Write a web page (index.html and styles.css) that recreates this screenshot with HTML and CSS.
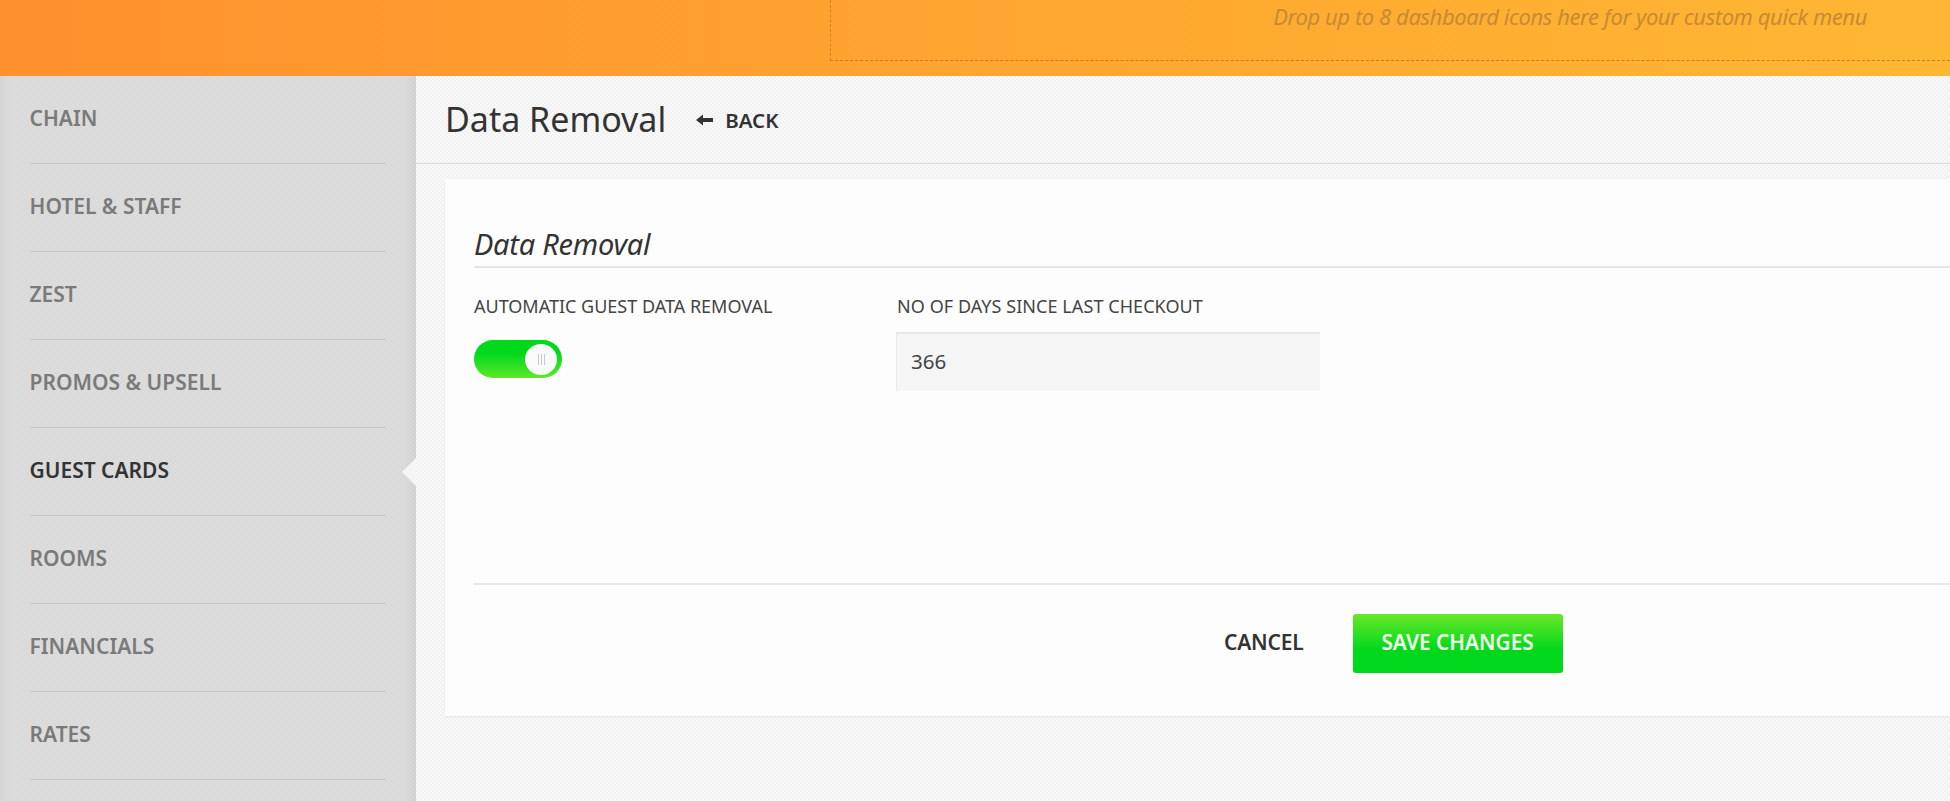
FILE: index.html
```html
<!DOCTYPE html>
<html lang="en">
<head>
<meta charset="utf-8">
<title>Data Removal</title>
<link rel="stylesheet" href="styles.css">
</head>
<body>
<div class="app">
  <header class="topbar">
    <div class="dropzone"><span class="drop-hint">Drop up to 8 dashboard icons here for your custom quick menu</span></div>
  </header>
  <div class="main">
    <nav class="sidebar">
      <ul class="nav">
        <li class="nav-item">CHAIN</li>
        <li class="nav-item">HOTEL &amp; STAFF</li>
        <li class="nav-item">ZEST</li>
        <li class="nav-item">PROMOS &amp; UPSELL</li>
        <li class="nav-item nav-item-active">GUEST CARDS</li>
        <li class="nav-item">ROOMS</li>
        <li class="nav-item">FINANCIALS</li>
        <li class="nav-item">RATES</li>
      </ul>
    </nav>
    <section class="content">
      <div class="page-head">
        <h1 class="page-title">Data Removal</h1>
        <a class="back-link">
          <svg class="back-icon" width="17" height="12" viewBox="0 0 17 12" aria-hidden="true"><path d="M0 6 L7 0.5 V4 H17 V8 H7 V11.5 Z" fill="#333"/></svg>
          BACK
        </a>
      </div>
      <div class="card">
        <h2 class="card-title">Data Removal</h2>
        <div class="fields">
          <div class="field field-toggle">
            <label class="field-label">AUTOMATIC GUEST DATA REMOVAL</label>
            <div class="toggle"><span class="knob"><span class="grip"></span></span></div>
          </div>
          <div class="field">
            <label class="field-label label-days">NO OF DAYS SINCE LAST CHECKOUT</label>
            <div class="input">366</div>
          </div>
        </div>
        <div class="actions">
          <a class="btn-cancel">CANCEL</a>
          <a class="btn-save">SAVE CHANGES</a>
        </div>
      </div>
    </section>
  </div>
</div>
</body>
</html>
```
FILE: styles.css
```css
* { box-sizing: border-box; }
html, body { margin: 0; height: 100%; overflow: hidden; }
body {
  font-family: "Noto Sans", "Open Sans", sans-serif;
  color: #333;
}
.app { display: flex; flex-direction: column; height: 801px; }

.topbar {
  height: 76px;
  flex: none;
  padding-left: 830px;
  background:
    radial-gradient(circle at 1px 1px, rgba(255,255,255,.03) 1px, transparent 1.2px) 0 0 / 4px 4px,
    radial-gradient(circle at 1px 1px, rgba(255,255,255,.03) 1px, transparent 1.2px) 2px 2px / 4px 4px,
    linear-gradient(90deg, #ff8f2a 0%, #ffa02c 40%, #ffb62f 100%);
}
.dropzone {
  height: 61px;
  border-left: 1px dashed rgba(170,100,20,.55);
  border-bottom: 1px dashed rgba(170,100,20,.65);
  display: flex;
  justify-content: flex-end;
  padding: 1px 83px 0 0;
}
.drop-hint {
  font-style: italic;
  font-size: 22px;
  line-height: 30px;
  letter-spacing: -.42px;
  color: #c98a35;
}

.main { flex: 1; display: flex; min-height: 0; }

.sidebar {
  width: 416px;
  flex: none;
  padding: 0 30px;
  background:
    radial-gradient(circle at 1px 1px, rgba(255,255,255,.1) 1px, transparent 1.2px) 0 0 / 4px 4px,
    radial-gradient(circle at 1px 1px, rgba(255,255,255,.1) 1px, transparent 1.2px) 2px 2px / 4px 4px,
    linear-gradient(90deg, #d3d3d3 0, #d9d9d9 10px, #d9d9d9 404px, #cfcfcf 416px);
}
.nav { list-style: none; margin: 0; padding: 0; }
.nav-item {
  position: relative;
  height: 88px;
  padding-top: 26px;
  line-height: 32px;
  font-size: 21px;
  font-weight: 600;
  text-indent: -.5px;
  color: #7a7a7a;
  border-bottom: 1px solid #c6c6c6;
}
.nav-item-active { color: #333; }
.nav-item-active::after {
  content: "";
  position: absolute;
  right: -30px;
  top: 30px;
  border: 14px solid transparent;
  border-left-width: 0;
  border-right-color: #f5f5f5;
}

.content {
  flex: 1;
  min-width: 0;
  background:
    radial-gradient(circle at 1px 1px, rgba(255,255,255,.55) 1px, transparent 1.2px) 0 0 / 4px 4px,
    radial-gradient(circle at 1px 1px, rgba(255,255,255,.55) 1px, transparent 1.2px) 2px 2px / 4px 4px,
    #f1f1f1;
}
.page-head {
  height: 88px;
  padding: 0 0 0 29px;
  display: flex;
  align-items: center;
  border-bottom: 1px solid #dcdcdc;
}
.page-title {
  margin: 0 0 2px;
  font-size: 34px;
  font-weight: 400;
  color: #333;
}
.back-link {
  margin-left: 30px;
  display: flex;
  align-items: center;
  gap: 12px;
  font-size: 20.5px;
  font-weight: 600;
  color: #333;
}
.back-icon { flex: none; }

.card {
  margin: 15px 0 0 29px;
  height: 537px;
  padding: 48px 0 0 29px;
  background: #fdfdfd;
  box-shadow: 0 1px 2px rgba(0,0,0,.07);
}
.card-title {
  margin: 0;
  height: 41px;
  line-height: 33px;
  font-size: 29px;
  font-style: italic;
  font-weight: 400;
  letter-spacing: -.25px;
  color: #333;
  border-bottom: 2px solid #e6e6e6;
}
.fields { display: flex; margin-top: 23px; }
.field { display: flex; flex-direction: column; }
.field-toggle { width: 422px; }
.field-label {
  font-size: 18px;
  line-height: 30px;
  color: #444;
}
.label-days { letter-spacing: .07px; padding-left: 1px; }
.toggle {
  position: relative;
  margin-top: 19px;
  width: 88px;
  height: 38px;
  border-radius: 19px;
  background: linear-gradient(180deg, #00d81c 0%, #00d81c 35%, #5ee828 100%);
}
.knob {
  position: absolute;
  top: 4px;
  right: 5px;
  width: 32px;
  height: 31px;
  border-radius: 50%;
  background: #fafafa;
  display: flex;
  align-items: center;
  justify-content: center;
}
.grip {
  width: 7px;
  height: 11px;
  background: repeating-linear-gradient(90deg, #c9c9c9 0, #c9c9c9 1px, transparent 1px, transparent 3px);
}
.input {
  margin-top: 11px;
  width: 424px;
  height: 59px;
  padding: 0 14px 3px;
  display: flex;
  align-items: center;
  font-size: 20.5px;
  color: #444;
  background: #f5f5f5;
  border-top: 2px solid #e8e8e8;
  border-left: 1px solid #e8e8e8;
}
.actions {
  margin-top: 192px;
  border-top: 2px solid #e8e8e8;
  padding-top: 29px;
  display: flex;
  align-items: center;
}
.btn-cancel {
  margin: 0 0 4px 750px;
  font-size: 21px;
  font-weight: 600;
  letter-spacing: -.2px;
  color: #333;
}
.btn-save {
  margin-left: 49px;
  width: 210px;
  height: 59px;
  padding-bottom: 4px;
  display: flex;
  align-items: center;
  justify-content: center;
  border-radius: 3px;
  font-size: 20.8px;
  font-weight: 600;
  color: #f2fbee;
  background: linear-gradient(180deg, #68e82a 0%, #00d81c 62%, #00d81c 100%);
}
```
